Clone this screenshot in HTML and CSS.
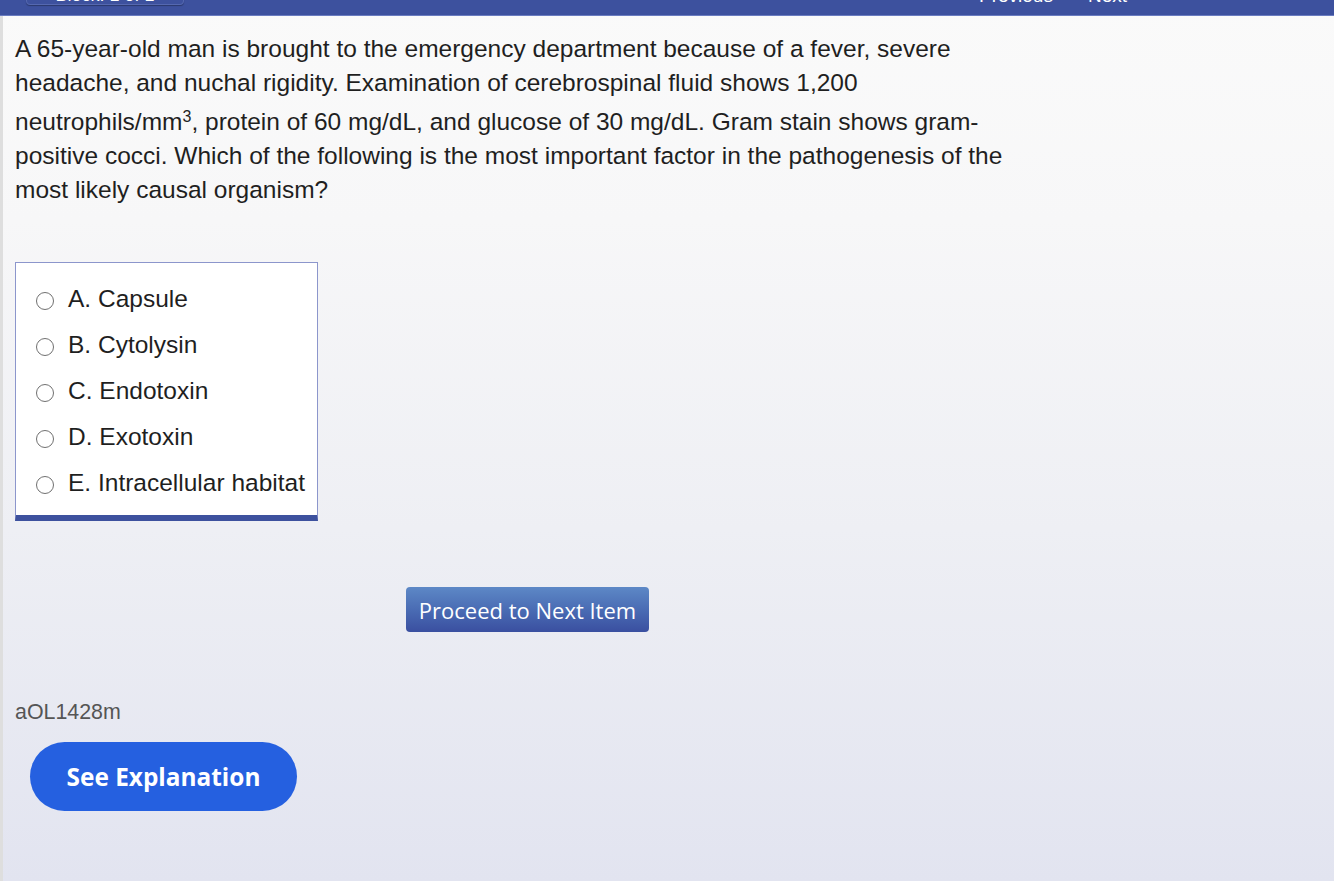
FILE: index.html
```html
<!DOCTYPE html>
<html>
<head>
<meta charset="utf-8">
<link rel="stylesheet" href="styles.css">
</head>
<body>
<header class="topbar">
  <div class="block-btn"><span class="block-label">Block: 1 of 1</span></div>
  <nav class="nav">
    <span class="nav-item">Previous</span>
    <span class="nav-item">Next</span>
  </nav>
</header>
<main class="page">
  <div class="content">
    <p class="stem">A 65-year-old man is brought to the emergency department because of a fever, severe headache, and nuchal rigidity. Examination of cerebrospinal fluid shows 1,200 neutrophils/mm<sup>3</sup>, protein of 60 mg/dL, and glucose of 30 mg/dL. Gram stain shows gram-positive cocci. Which of the following is the most important factor in the pathogenesis of the most likely causal organism?</p>

    <div class="choices">
      <label class="choice"><span class="radio"></span><span>A. Capsule</span></label>
      <label class="choice"><span class="radio"></span><span>B. Cytolysin</span></label>
      <label class="choice"><span class="radio"></span><span>C. Endotoxin</span></label>
      <label class="choice"><span class="radio"></span><span>D. Exotoxin</span></label>
      <label class="choice"><span class="radio"></span><span>E. Intracellular habitat</span></label>
    </div>

    <div class="proceed-row">
      <button class="proceed">Proceed to Next Item</button>
    </div>

    <div class="qid">aOL1428m</div>

    <button class="explain">See Explanation</button>
  </div>
</main>
</body>
</html>
```
FILE: styles.css
```css
html, body {
  margin: 0;
  padding: 0;
  height: 100%;
}
body {
  font-family: "Liberation Sans", Arial, sans-serif;
  color: #1f1f1f;
  background: linear-gradient(to bottom, #fafafa 0%, #f7f7f8 25%, #eeeff4 60%, #e2e4f0 100%);
  min-height: 881px;
  overflow: hidden;
}
.topbar {
  height: 15px;
  background: #3d519e;
  border-bottom: 1px solid #6a7cc0;
  display: flex;
  justify-content: space-between;
  align-items: flex-end;
  overflow: hidden;
  color: #ffffff;
  padding: 0 207px 0 26px;
}
.block-btn {
  width: 158px;
  height: 30px;
  margin-bottom: 10px;
  border: 1px solid #5568b0;
  border-radius: 4px;
  box-shadow: 0 1px 1px rgba(0,0,0,0.3);
  box-sizing: border-box;
  display: flex;
  align-items: flex-end;
  justify-content: center;
}
.block-label {
  font-size: 18px;
  line-height: 17px;
}
.nav {
  display: flex;
  gap: 35px;
  margin-bottom: 10px;
  font-size: 19px;
  line-height: 19px;
}
.page {
  border-left: 3px solid #dedede;
  min-height: 865px;
  box-sizing: border-box;
}
.content {
  width: 1025px;
  padding: 16px 0 0 12px;
}
.stem {
  margin: 0;
  font-size: 24.5px;
  line-height: 34px;
}
.stem sup {
  font-size: 16px;
  line-height: 34px;
  vertical-align: 8px;
}
.choices {
  margin-top: 55px;
  width: 303px;
  box-sizing: border-box;
  background: #ffffff;
  border: 1px solid #8c96cc;
  border-bottom: 6px solid #3d519e;
  padding: 18px 0 15px 20px;
  display: flex;
  flex-direction: column;
  gap: 11px;
}
.choice {
  display: flex;
  align-items: center;
  gap: 14px;
  font-size: 24.5px;
  line-height: 35px;
  color: #1f1f1f;
}
.radio {
  width: 18px;
  height: 18px;
  border: 1.5px solid #707070;
  border-radius: 50%;
  box-sizing: border-box;
  margin-top: 5px;
  flex: none;
}
.proceed-row {
  display: flex;
  justify-content: center;
  margin-top: 66px;
}
.proceed {
  width: 243px;
  height: 45px;
  border: none;
  border-radius: 4px;
  background: linear-gradient(to bottom, #5d88c6 0%, #4a6cb4 50%, #3a4fa0 100%);
  color: #ffffff;
  font-family: "Open Sans", sans-serif;
  font-size: 22px;
  font-weight: 400;
  padding: 0;
}
.qid {
  margin-top: 68px;
  font-size: 21.4px;
  line-height: 24px;
  color: #555555;
}
.explain {
  margin: 18px 0 0 15px;
  width: 267px;
  height: 69px;
  border: none;
  border-radius: 35px;
  background: #2560e0;
  color: #ffffff;
  font-family: "Open Sans", sans-serif;
  font-weight: 700;
  font-size: 24.4px;
  padding: 0;
}
```
